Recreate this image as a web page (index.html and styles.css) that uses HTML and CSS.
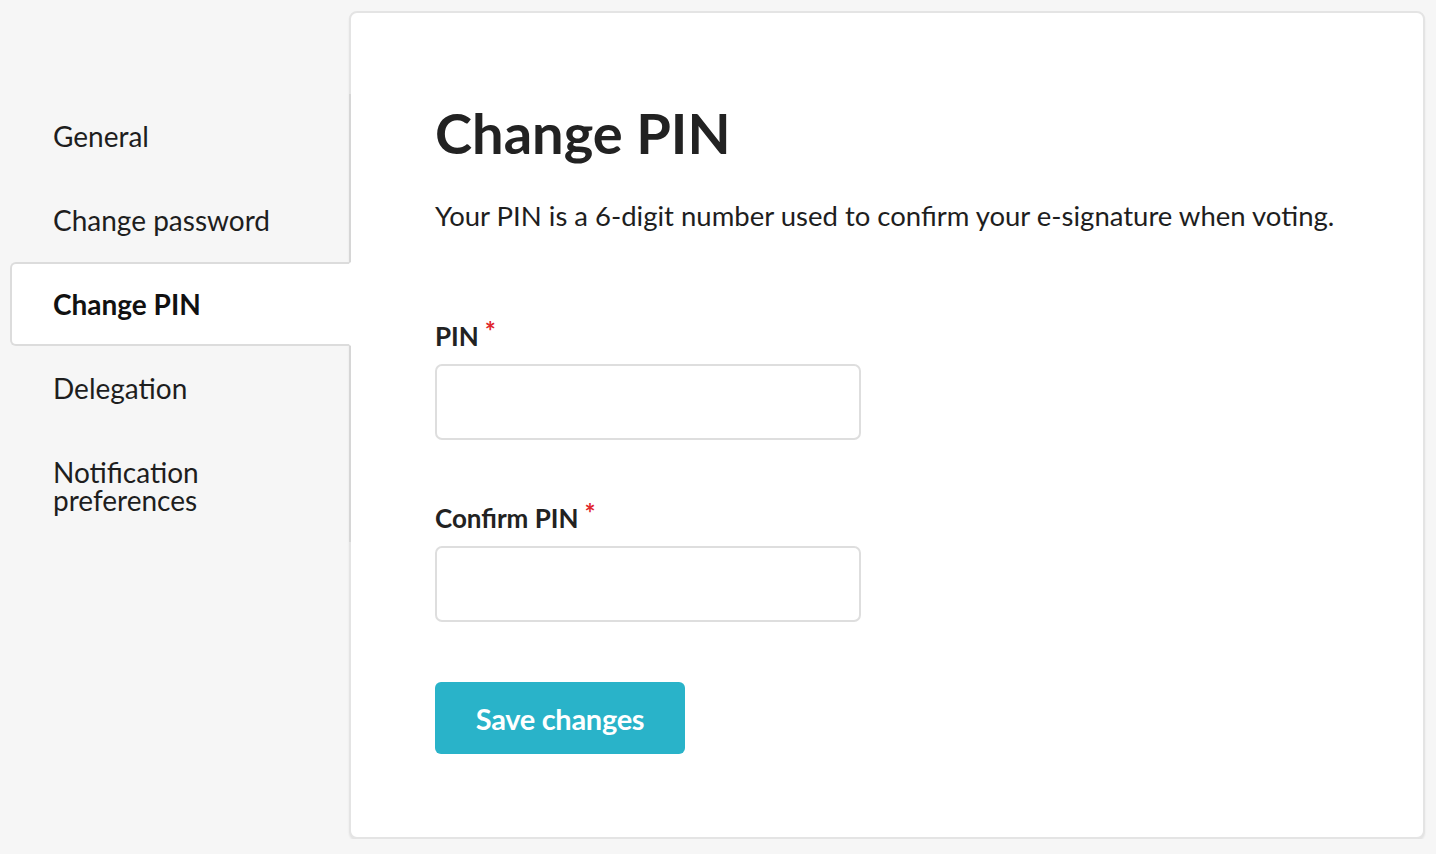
FILE: index.html
```html
<!DOCTYPE html>
<html>
<head>
<meta charset="utf-8">
<link rel="stylesheet" href="styles.css">
</head>
<body>
<div class="page">
  <nav class="sidebar">
    <a class="nav-item">General</a>
    <a class="nav-item">Change password</a>
    <a class="nav-item active">Change PIN</a>
    <a class="nav-item">Delegation</a>
    <a class="nav-item">Notification<br>preferences</a>
  </nav>
  <main class="card">
    <h1 class="title">Change PIN</h1>
    <p class="desc">Your PIN is a 6-digit number used to confirm your e-signature when voting.</p>
    <div class="field">
      <label class="label">PIN<span class="req">*</span></label>
      <input class="input" type="password">
    </div>
    <div class="field">
      <label class="label">Confirm PIN<span class="req">*</span></label>
      <input class="input" type="password">
    </div>
    <button class="btn">Save changes</button>
  </main>
</div>
</body>
</html>
```

FILE: styles.css
```css
* { box-sizing: border-box; }
html, body { margin: 0; padding: 0; }
body {
  background: #f6f6f6;
  font-family: Lato, "Open Sans", sans-serif;
  color: #222;
}
.page {
  display: flex;
  align-items: flex-start;
  padding: 11px 11px 0 10px;
}
.sidebar {
  width: 341px;
  flex: none;
  margin-top: 83px;
  margin-right: -2px;
  position: relative;
  z-index: 1;
  display: flex;
  flex-direction: column;
}
.nav-item {
  display: block;
  padding: 28px 20px 28px 43px;
  font-size: 28px;
  line-height: 28px;
  color: #1e1e1e;
  border-right: 2px solid #d6d6d6;
}
.nav-item.active {
  background: #fff;
  font-weight: 700;
  color: #111;
  border: 2px solid #dcdcdc;
  border-right: 2px solid #fff;
  border-radius: 6px 0 0 6px;
  padding: 26px 20px 26px 41px;
}
.card {
  flex: 1;
  background: #fff;
  border: 2px solid #e4e4e4;
  border-radius: 8px;
  box-shadow: 0 2px 2px rgba(0,0,0,0.08);
  min-height: 828px;
  padding: 90px 40px 40px 84px;
}
.title {
  margin: 0;
  font-size: 56px;
  line-height: 60px;
  font-weight: 700;
  color: #222;
}
.desc {
  margin: 37px 0 0;
  font-size: 27.5px;
  line-height: 32px;
  color: #1e1e1e;
}
.field {
  margin-top: 84px;
}
.field + .field {
  margin-top: 58px;
}
.label {
  display: block;
  height: 30px;
  font-size: 26px;
  line-height: 30px;
  font-weight: 700;
  color: #222;
}
.req {
  color: #e0262c;
  font-size: 26px;
  font-weight: 700;
  vertical-align: 5px;
  margin-left: 6px;
}
.input {
  display: block;
  margin-top: 18px;
  width: 426px;
  height: 76px;
  border: 2px solid #dedede;
  border-radius: 7px;
  background: #fff;
  outline: none;
}
.btn {
  display: block;
  margin-top: 60px;
  width: 250px;
  height: 72px;
  border: none;
  border-radius: 6px;
  background: #29b3c9;
  color: #fff;
  font-family: Lato, sans-serif;
  font-weight: 700;
  font-size: 29px;
  letter-spacing: -0.3px;
}
```
